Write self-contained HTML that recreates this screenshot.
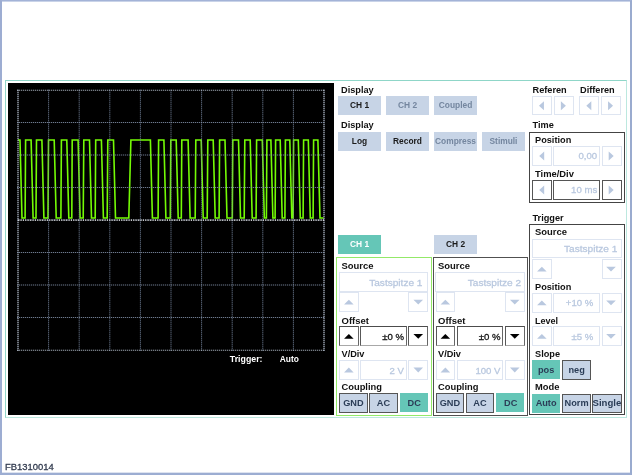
<!DOCTYPE html>
<html><head><meta charset="utf-8"><title>Oscilloscope</title>
<style>
html,body{margin:0;padding:0;}
body{width:632px;height:475px;position:relative;overflow:hidden;background:#fff;font-family:"Liberation Sans",Arial,Helvetica,sans-serif;}
#root{position:absolute;left:0;top:0;width:632px;height:475px;will-change:transform;}
#frame{position:absolute;left:0;top:0;width:628px;height:472px;border-style:solid;border-color:#a3b3d7 #9aabcf #9cadd2 #9dadd2;border-width:1px 2px 2px 2px;box-shadow:inset 0 1px 0 #c9d3e8, inset 0 -1px 0 #dde3f0;}
#panel{position:absolute;left:5px;top:80px;width:620px;height:336.3px;border:1px solid;border-color:#8fd6c8 #bce8df #bce8df #93d6c9;}
#scope{position:absolute;left:8px;top:83.1px;width:325.9px;height:331.7px;background:#000;}
.b{position:absolute;box-sizing:border-box;}
.t{position:absolute;line-height:12px;white-space:nowrap;}
.lb{font-weight:bold;color:#111;}
.bt,.bb{font-weight:bold;}
.v{font-weight:normal;-webkit-text-stroke:0.3px currentColor;}
svg{position:absolute;left:0;top:0;}
#foot{position:absolute;left:5px;top:461.3px;font-size:9.45px;line-height:12px;color:#333c50;-webkit-text-stroke:0.3px #333c50;}
</style></head><body>
<div id="root">
<div id="frame"></div>
<div id="panel"></div>
<div id="scope"></div>
<div class="t lb" style="top:83.96px;font-size:9.2px;transform:scaleY(0.89);left:341px;transform-origin:0 9.04px;">Display</div>
<div class="b" style="left:338px;top:96px;width:43px;height:19px;background:#c7d4e6;"></div>
<div class="t bt" style="top:98.92px;font-size:8.4px;transform:scaleY(1);left:309.5px;width:100px;text-align:center;transform-origin:50% 8.78px;color:#1a1a1a;">CH 1</div>
<div class="b" style="left:386px;top:96px;width:43px;height:19px;background:#c7d4e6;"></div>
<div class="t bt" style="top:98.92px;font-size:8.4px;transform:scaleY(1);left:357.5px;width:100px;text-align:center;transform-origin:50% 8.78px;color:#74869f;">CH 2</div>
<div class="b" style="left:434px;top:96px;width:43px;height:19px;background:#c7d4e6;"></div>
<div class="t bt" style="top:98.92px;font-size:8.4px;transform:scaleY(1);left:405.5px;width:100px;text-align:center;transform-origin:50% 8.78px;color:#74869f;">Coupled</div>
<div class="t lb" style="top:119.36px;font-size:9.2px;transform:scaleY(0.89);left:341px;transform-origin:0 9.04px;">Display</div>
<div class="b" style="left:338px;top:131.6px;width:43px;height:19.3px;background:#c7d4e6;"></div>
<div class="t bt" style="top:134.92px;font-size:8.4px;transform:scaleY(1);left:309.5px;width:100px;text-align:center;transform-origin:50% 8.78px;color:#1a1a1a;">Log</div>
<div class="b" style="left:386px;top:131.6px;width:43px;height:19.3px;background:#c7d4e6;"></div>
<div class="t bt" style="top:134.92px;font-size:8.4px;transform:scaleY(1);left:357.5px;width:100px;text-align:center;transform-origin:50% 8.78px;color:#1a1a1a;">Record</div>
<div class="b" style="left:434px;top:131.6px;width:43px;height:19.3px;background:#c7d4e6;"></div>
<div class="t bt" style="top:134.92px;font-size:8.4px;transform:scaleY(1);left:405.5px;width:100px;text-align:center;transform-origin:50% 8.78px;color:#74869f;">Compress</div>
<div class="b" style="left:482px;top:131.6px;width:43px;height:19.3px;background:#c7d4e6;"></div>
<div class="t bt" style="top:134.92px;font-size:8.4px;transform:scaleY(1);left:453.5px;width:100px;text-align:center;transform-origin:50% 8.78px;color:#74869f;">Stimuli</div>
<div class="t lb" style="top:83.56px;font-size:9.2px;transform:scaleY(0.89);left:532.5px;transform-origin:0 9.04px;">Referen</div>
<div class="t lb" style="top:83.56px;font-size:9.2px;transform:scaleY(0.89);left:580px;transform-origin:0 9.04px;">Differen</div>
<div class="b" style="left:531.6px;top:95.6px;width:20.1px;height:19.8px;background:#fff;border:1px solid #dee5f1;"></div>
<div class="b" style="left:554.2px;top:95.6px;width:19.8px;height:19.8px;background:#fff;border:1px solid #dee5f1;"></div>
<div class="b" style="left:579.2px;top:95.6px;width:19.6px;height:19.8px;background:#fff;border:1px solid #dee5f1;"></div>
<div class="b" style="left:601.2px;top:95.6px;width:20.1px;height:19.8px;background:#fff;border:1px solid #dee5f1;"></div>
<div class="t lb" style="top:119.16px;font-size:9.2px;transform:scaleY(0.89);left:532.5px;transform-origin:0 9.04px;">Time</div>
<div class="b" style="left:529px;top:132px;width:96px;height:71px;border:1px solid #444;"></div>
<div class="t lb" style="top:134.26px;font-size:9.2px;transform:scaleY(0.89);left:535px;transform-origin:0 9.04px;">Position</div>
<div class="b" style="left:532.1px;top:146.2px;width:19.6px;height:19.4px;background:#fff;border:1px solid #dee5f1;"></div>
<div class="b" style="left:553.4px;top:146.2px;width:46.3px;height:19.4px;background:#fff;border:1px solid #dee5f1;"></div>
<div class="b" style="left:602px;top:146.2px;width:19.8px;height:19.4px;background:#fff;border:1px solid #dee5f1;"></div>
<div class="t v" style="top:150.43px;font-size:9.6px;transform:scaleY(0.9);right:34.8px;transform-origin:100% 9.17px;color:#b9c8df;">0,00</div>
<div class="t lb" style="top:167.99px;font-size:9.4px;transform:scaleY(0.871);left:535px;transform-origin:0 9.11px;">Time/Div</div>
<div class="b" style="left:532.1px;top:180px;width:19.6px;height:19.7px;background:#fff;border:1px solid #555;"></div>
<div class="b" style="left:553.4px;top:180px;width:46.3px;height:19.7px;background:#fff;border:1px solid #555;"></div>
<div class="b" style="left:602px;top:180px;width:19.8px;height:19.7px;background:#fff;border:1px solid #555;"></div>
<div class="t v" style="top:184.43px;font-size:9.6px;transform:scaleY(0.9);right:34.8px;transform-origin:100% 9.17px;color:#b9c8df;">10 ms</div>
<div class="t lb" style="top:211.76px;font-size:9.2px;transform:scaleY(0.89);left:532.5px;transform-origin:0 9.04px;">Trigger</div>
<div class="b" style="left:529px;top:224px;width:95.8px;height:191.2px;border:1px solid #444;"></div>
<div class="t lb" style="top:226.38px;font-size:9.45px;transform:scaleY(0.867);left:535px;transform-origin:0 9.12px;">Source</div>
<div class="b" style="left:532px;top:239.2px;width:89.8px;height:19.3px;background:#fff;border:1px solid #dee5f1;"></div>
<div class="t v" style="top:243.26px;font-size:10.1px;transform:scaleY(0.9);right:14.7px;transform-origin:100% 9.34px;color:#b9c8df;">Tastspitze 1</div>
<div class="b" style="left:532px;top:258.8px;width:19.7px;height:20.4px;background:#fff;border:1px solid #dee5f1;"></div>
<div class="b" style="left:602px;top:258.8px;width:19.8px;height:20.4px;background:#fff;border:1px solid #dee5f1;"></div>
<div class="t lb" style="top:281.26px;font-size:9.2px;transform:scaleY(0.89);left:535px;transform-origin:0 9.04px;">Position</div>
<div class="b" style="left:532px;top:293px;width:19.7px;height:19.5px;background:#fff;border:1px solid #dee5f1;"></div>
<div class="b" style="left:553.4px;top:293px;width:46.3px;height:19.5px;background:#fff;border:1px solid #dee5f1;"></div>
<div class="b" style="left:602px;top:293px;width:19.8px;height:19.5px;background:#fff;border:1px solid #dee5f1;"></div>
<div class="t v" style="top:297.43px;font-size:9.6px;transform:scaleY(0.9);right:38.7px;transform-origin:100% 9.17px;color:#b9c8df;">+10 %</div>
<div class="t lb" style="top:314.61px;font-size:9.05px;transform:scaleY(0.905);left:535px;transform-origin:0 8.99px;">Level</div>
<div class="b" style="left:532px;top:326.4px;width:19.7px;height:19.6px;background:#fff;border:1px solid #dee5f1;"></div>
<div class="b" style="left:553.4px;top:326.4px;width:46.3px;height:19.6px;background:#fff;border:1px solid #dee5f1;"></div>
<div class="b" style="left:602px;top:326.4px;width:19.8px;height:19.6px;background:#fff;border:1px solid #dee5f1;"></div>
<div class="t v" style="top:330.63px;font-size:9.6px;transform:scaleY(0.9);right:38.7px;transform-origin:100% 9.17px;color:#b9c8df;">±5 %</div>
<div class="t lb" style="top:348.06px;font-size:9.2px;transform:scaleY(0.89);left:535px;transform-origin:0 9.04px;">Slope</div>
<div class="b" style="left:532px;top:360.2px;width:28.2px;height:19px;background:#65c6b7;"></div>
<div class="t bb" style="top:364.06px;font-size:9.2px;transform:scaleY(1);left:496.1px;width:100px;text-align:center;transform-origin:50% 9.04px;color:#2b3d57;">pos</div>
<div class="b" style="left:562.3px;top:360.2px;width:28.6px;height:19.5px;background:#c7d4e6;border:1px solid #555;"></div>
<div class="t bb" style="top:364.06px;font-size:9.2px;transform:scaleY(1);left:526.6px;width:100px;text-align:center;transform-origin:50% 9.04px;color:#2b3d57;">neg</div>
<div class="t lb" style="top:381.01px;font-size:9.35px;transform:scaleY(0.876);left:535px;transform-origin:0 9.09px;">Mode</div>
<div class="b" style="left:532px;top:393.5px;width:28.2px;height:19px;background:#65c6b7;"></div>
<div class="t bb" style="top:397.26px;font-size:9.2px;transform:scaleY(1);left:496.1px;width:100px;text-align:center;transform-origin:50% 9.04px;color:#2b3d57;">Auto</div>
<div class="b" style="left:562.3px;top:393.5px;width:28.6px;height:19.3px;background:#c7d4e6;border:1px solid #555;"></div>
<div class="t bb" style="top:397.26px;font-size:9.2px;transform:scaleY(1);left:526.6px;width:100px;text-align:center;transform-origin:50% 9.04px;color:#2b3d57;">Norm</div>
<div class="b" style="left:592.3px;top:393.5px;width:29.5px;height:19.3px;background:#c7d4e6;border:1px solid #555;"></div>
<div class="t bb" style="top:397.13px;font-size:9.6px;transform:scaleY(1);left:556.9px;width:100px;text-align:center;transform-origin:50% 9.17px;color:#2b3d57;">Single</div>
<div class="b" style="left:338px;top:235px;width:43px;height:19px;background:#65c6b7;"></div>
<div class="t bt" style="top:237.92px;font-size:8.4px;transform:scaleY(1);left:309.5px;width:100px;text-align:center;transform-origin:50% 8.78px;color:#fff;">CH 1</div>
<div class="b" style="left:434px;top:235px;width:43px;height:19px;background:#c7d4e6;"></div>
<div class="t bt" style="top:237.92px;font-size:8.4px;transform:scaleY(1);left:405.5px;width:100px;text-align:center;transform-origin:50% 8.78px;color:#1a1a1a;">CH 2</div>
<div class="b" style="left:336px;top:257px;width:96px;height:159px;border:1px solid #93e968;"></div>
<div class="b" style="left:432.7px;top:256.8px;width:95.3px;height:158.9px;border:1px solid #505050;"></div>
<div class="t lb" style="top:259.78px;font-size:9.45px;transform:scaleY(0.867);left:341.5px;transform-origin:0 9.12px;">Source</div>
<div class="b" style="left:338.8px;top:272px;width:89.7px;height:19.5px;background:#fff;border:1px solid #dee5f1;"></div>
<div class="t v" style="top:276.86px;font-size:10.1px;transform:scaleY(0.9);right:209.5px;transform-origin:100% 9.34px;color:#b9c8df;">Tastspitze 1</div>
<div class="b" style="left:339px;top:291.8px;width:19.7px;height:20.3px;background:#fff;border:1px solid #dee5f1;"></div>
<div class="b" style="left:408.3px;top:291.8px;width:19.9px;height:20.3px;background:#fff;border:1px solid #dee5f1;"></div>
<div class="t lb" style="top:314.66px;font-size:9.5px;transform:scaleY(0.862);left:341.5px;transform-origin:0 9.14px;">Offset</div>
<div class="b" style="left:339px;top:326.3px;width:19.7px;height:19.7px;background:#fff;border:1px solid;border-color:#4c4c4c #666 #a8a8a8 #585858;"></div>
<div class="b" style="left:360.2px;top:326.3px;width:46.5px;height:19.7px;background:#fff;border:1px solid;border-color:#4c4c4c #666 #a8a8a8 #585858;"></div>
<div class="b" style="left:408.3px;top:326.3px;width:19.9px;height:19.7px;background:#fff;border:1px solid;border-color:#4c4c4c #666 #a8a8a8 #585858;"></div>
<div class="t v" style="top:330.73px;font-size:9.6px;transform:scaleY(0.9);right:228.0px;transform-origin:100% 9.17px;color:#111;">±0 %</div>
<div class="t lb" style="top:347.76px;font-size:9.2px;transform:scaleY(0.89);left:341.5px;transform-origin:0 9.04px;">V/Div</div>
<div class="b" style="left:339px;top:360px;width:19.7px;height:19.6px;background:#fff;border:1px solid #dee5f1;"></div>
<div class="b" style="left:360.2px;top:360px;width:46.5px;height:19.6px;background:#fff;border:1px solid #dee5f1;"></div>
<div class="b" style="left:408.3px;top:360px;width:19.9px;height:19.6px;background:#fff;border:1px solid #dee5f1;"></div>
<div class="t v" style="top:364.63px;font-size:9.6px;transform:scaleY(0.9);right:228.0px;transform-origin:100% 9.17px;color:#b9c8df;">2 V</div>
<div class="t lb" style="top:381.11px;font-size:9.35px;transform:scaleY(0.876);left:341.5px;transform-origin:0 9.09px;">Coupling</div>
<div class="b" style="left:339px;top:393.3px;width:28.7px;height:19.4px;background:#c7d4e6;border:1px solid #555;"></div>
<div class="t bb" style="top:396.86px;font-size:9.2px;transform:scaleY(1);left:303.4px;width:100px;text-align:center;transform-origin:50% 9.04px;color:#2b3d57;">GND</div>
<div class="b" style="left:369.2px;top:393.3px;width:28.6px;height:19.4px;background:#c7d4e6;border:1px solid #555;"></div>
<div class="t bb" style="top:396.86px;font-size:9.2px;transform:scaleY(1);left:333.5px;width:100px;text-align:center;transform-origin:50% 9.04px;color:#2b3d57;">AC</div>
<div class="b" style="left:399.9px;top:393.3px;width:28.1px;height:19px;background:#65c6b7;"></div>
<div class="t bb" style="top:396.86px;font-size:9.2px;transform:scaleY(1);left:364.2px;width:100px;text-align:center;transform-origin:50% 9.04px;color:#2b3d57;">DC</div>
<div class="t lb" style="top:259.78px;font-size:9.45px;transform:scaleY(0.867);left:438.0px;transform-origin:0 9.12px;">Source</div>
<div class="b" style="left:435.3px;top:272px;width:89.7px;height:19.5px;background:#fff;border:1px solid #dee5f1;"></div>
<div class="t v" style="top:276.86px;font-size:10.1px;transform:scaleY(0.9);right:110.9px;transform-origin:100% 9.34px;color:#b9c8df;">Tastspitze 2</div>
<div class="b" style="left:435.5px;top:291.8px;width:19.7px;height:20.3px;background:#fff;border:1px solid #dee5f1;"></div>
<div class="b" style="left:504.8px;top:291.8px;width:19.9px;height:20.3px;background:#fff;border:1px solid #dee5f1;"></div>
<div class="t lb" style="top:314.66px;font-size:9.5px;transform:scaleY(0.862);left:438.0px;transform-origin:0 9.14px;">Offset</div>
<div class="b" style="left:435.5px;top:326.3px;width:19.7px;height:19.7px;background:#fff;border:1px solid;border-color:#4c4c4c #666 #a8a8a8 #585858;"></div>
<div class="b" style="left:456.7px;top:326.3px;width:46.5px;height:19.7px;background:#fff;border:1px solid;border-color:#4c4c4c #666 #a8a8a8 #585858;"></div>
<div class="b" style="left:504.8px;top:326.3px;width:19.9px;height:19.7px;background:#fff;border:1px solid;border-color:#4c4c4c #666 #a8a8a8 #585858;"></div>
<div class="t v" style="top:330.73px;font-size:9.6px;transform:scaleY(0.9);right:131.5px;transform-origin:100% 9.17px;color:#111;">±0 %</div>
<div class="t lb" style="top:347.76px;font-size:9.2px;transform:scaleY(0.89);left:438.0px;transform-origin:0 9.04px;">V/Div</div>
<div class="b" style="left:435.5px;top:360px;width:19.7px;height:19.6px;background:#fff;border:1px solid #dee5f1;"></div>
<div class="b" style="left:456.7px;top:360px;width:46.5px;height:19.6px;background:#fff;border:1px solid #dee5f1;"></div>
<div class="b" style="left:504.8px;top:360px;width:19.9px;height:19.6px;background:#fff;border:1px solid #dee5f1;"></div>
<div class="t v" style="top:364.63px;font-size:9.6px;transform:scaleY(0.9);right:131.5px;transform-origin:100% 9.17px;color:#b9c8df;">100 V</div>
<div class="t lb" style="top:381.11px;font-size:9.35px;transform:scaleY(0.876);left:438.0px;transform-origin:0 9.09px;">Coupling</div>
<div class="b" style="left:435.5px;top:393.3px;width:28.7px;height:19.4px;background:#c7d4e6;border:1px solid #555;"></div>
<div class="t bb" style="top:396.86px;font-size:9.2px;transform:scaleY(1);left:399.9px;width:100px;text-align:center;transform-origin:50% 9.04px;color:#2b3d57;">GND</div>
<div class="b" style="left:465.7px;top:393.3px;width:28.6px;height:19.4px;background:#c7d4e6;border:1px solid #555;"></div>
<div class="t bb" style="top:396.86px;font-size:9.2px;transform:scaleY(1);left:430.0px;width:100px;text-align:center;transform-origin:50% 9.04px;color:#2b3d57;">AC</div>
<div class="b" style="left:496.4px;top:393.3px;width:28.1px;height:19px;background:#65c6b7;"></div>
<div class="t bb" style="top:396.86px;font-size:9.2px;transform:scaleY(1);left:460.7px;width:100px;text-align:center;transform-origin:50% 9.04px;color:#2b3d57;">DC</div>
<svg width="632" height="475" viewBox="0 0 632 475">

<polyline points="18.0,140.0 20.0,140.0 22.0,218.0 25.1,218.0 25.6,140.0 31.1,140.0 33.1,218.0 36.0,218.0 36.5,140.0 41.9,140.0 43.9,218.0 48.0,218.0 48.5,140.0 54.2,140.0 56.2,218.0 60.9,218.0 61.4,140.0 66.8,140.0 68.8,218.0 71.8,218.0 72.2,140.0 78.1,140.0 80.1,218.0 83.2,218.0 83.8,140.0 89.5,140.0 91.5,218.0 95.2,218.0 95.7,140.0 101.4,140.0 103.4,218.0 107.2,218.0 107.8,140.0 113.5,140.0 115.5,218.0 128.8,218.0 130.9,140.0 150.4,140.0 152.4,218.0 158.1,218.0 158.6,140.0 163.9,140.0 165.9,218.0 170.3,218.0 170.8,140.0 176.2,140.0 178.2,218.0 181.3,218.0 181.8,140.0 188.1,140.0 190.1,218.0 195.2,218.0 195.8,140.0 201.2,140.0 203.2,218.0 207.2,218.0 207.8,140.0 213.2,140.0 215.2,218.0 219.1,218.0 219.6,140.0 225.0,140.0 227.0,218.0 232.3,218.0 232.8,140.0 238.5,140.0 240.5,218.0 244.2,218.0 244.8,140.0 250.2,140.0 252.2,218.0 256.1,218.0 256.6,140.0 262.3,140.0 264.3,218.0 266.4,218.0 266.9,140.0 270.9,140.0 272.9,218.0 275.1,218.0 275.6,140.0 280.2,140.0 282.2,218.0 284.9,218.0 285.4,140.0 289.8,140.0 291.8,218.0 293.1,218.0 293.6,140.0 298.3,140.0 300.3,218.0 303.1,218.0 303.6,140.0 308.3,140.0 310.3,218.0 313.1,218.0 313.6,140.0 317.9,140.0 320.0,218.0 323.6,218.0" fill="none" stroke="#74fb05" stroke-width="1.6" stroke-linejoin="miter"/>
<g shape-rendering="auto">
<line x1="18.0" y1="89.7" x2="18.0" y2="350.7" stroke="#b8c2d2" stroke-width="1.6" stroke-dasharray="1 1"/>
<line x1="48.6" y1="89.7" x2="48.6" y2="350.7" stroke="#7b8ba5" stroke-width="1" stroke-dasharray="1 1"/>
<line x1="79.2" y1="89.7" x2="79.2" y2="350.7" stroke="#7b8ba5" stroke-width="1" stroke-dasharray="1 1"/>
<line x1="109.8" y1="89.7" x2="109.8" y2="350.7" stroke="#7b8ba5" stroke-width="1" stroke-dasharray="1 1"/>
<line x1="140.4" y1="89.7" x2="140.4" y2="350.7" stroke="#7b8ba5" stroke-width="1" stroke-dasharray="1 1"/>
<line x1="171.0" y1="89.7" x2="171.0" y2="350.7" stroke="#7b8ba5" stroke-width="1" stroke-dasharray="1 1"/>
<line x1="201.6" y1="89.7" x2="201.6" y2="350.7" stroke="#7b8ba5" stroke-width="1" stroke-dasharray="1 1"/>
<line x1="232.2" y1="89.7" x2="232.2" y2="350.7" stroke="#7b8ba5" stroke-width="1" stroke-dasharray="1 1"/>
<line x1="262.8" y1="89.7" x2="262.8" y2="350.7" stroke="#7b8ba5" stroke-width="1" stroke-dasharray="1 1"/>
<line x1="293.4" y1="89.7" x2="293.4" y2="350.7" stroke="#7b8ba5" stroke-width="1" stroke-dasharray="1 1"/>
<line x1="324.0" y1="89.7" x2="324.0" y2="350.7" stroke="#b8c2d2" stroke-width="1.6" stroke-dasharray="1 1"/>
<line x1="17.2" y1="90.25" x2="324.8" y2="90.25" stroke="#c2cbd9" stroke-width="1.2" stroke-dasharray="1 1"/>
<line x1="17.2" y1="122.50" x2="324.8" y2="122.50" stroke="#8796af" stroke-width="1" stroke-dasharray="1 1"/>
<line x1="17.2" y1="155.00" x2="324.8" y2="155.00" stroke="#8796af" stroke-width="1" stroke-dasharray="1 1"/>
<line x1="17.2" y1="187.50" x2="324.8" y2="187.50" stroke="#8796af" stroke-width="1" stroke-dasharray="1 1"/>
<line x1="17.2" y1="220.00" x2="324.8" y2="220.00" stroke="#8796af" stroke-width="1" stroke-dasharray="1 1"/>
<line x1="17.2" y1="252.50" x2="324.8" y2="252.50" stroke="#8796af" stroke-width="1" stroke-dasharray="1 1"/>
<line x1="17.2" y1="285.00" x2="324.8" y2="285.00" stroke="#8796af" stroke-width="1" stroke-dasharray="1 1"/>
<line x1="17.2" y1="317.50" x2="324.8" y2="317.50" stroke="#8796af" stroke-width="1" stroke-dasharray="1 1"/>
<line x1="17.2" y1="350.25" x2="324.8" y2="350.25" stroke="#c2cbd9" stroke-width="1.2" stroke-dasharray="1 1"/>
<line x1="18" y1="220.1" x2="324" y2="220.1" stroke="#f0f0f0" stroke-width="1.2" stroke-dasharray="1.2 1.2"/>
</g>
<text x="229.8" y="361.8" font-family="Liberation Sans, Arial, sans-serif" font-size="8.8" font-weight="bold" fill="#fff" transform="translate(0 361.8) scale(1 .95) translate(0 -361.8)">Trigger:</text>
<text x="279.8" y="361.8" font-family="Liberation Sans, Arial, sans-serif" font-size="8.4" font-weight="bold" fill="#fff">Auto</text>
<polygon points="538.9499999999999,105.7 543.9499999999999,101.2 543.9499999999999,110.2" fill="#b9c8df"/>
<polygon points="565.9,105.7 560.9,101.2 560.9,110.2" fill="#b9c8df"/>
<polygon points="586.3,105.7 591.3,101.2 591.3,110.2" fill="#b9c8df"/>
<polygon points="613.05,105.7 608.05,101.2 608.05,110.2" fill="#b9c8df"/>
<polygon points="539.1999999999999,156.09999999999997 544.1999999999999,151.59999999999997 544.1999999999999,160.59999999999997" fill="#b9c8df"/>
<polygon points="613.6999999999999,156.09999999999997 608.6999999999999,151.59999999999997 608.6999999999999,160.59999999999997" fill="#b9c8df"/>
<polygon points="539.1999999999999,190.04999999999998 544.1999999999999,185.54999999999998 544.1999999999999,194.54999999999998" fill="#b9c8df"/>
<polygon points="613.6999999999999,190.04999999999998 608.6999999999999,185.54999999999998 608.6999999999999,194.54999999999998" fill="#b9c8df"/>
<polygon points="541.85,266.8 537.0500000000001,271.59999999999997 546.65,271.59999999999997" fill="#b9c8df"/>
<polygon points="611.0,271.59999999999997 606.2,266.8 615.8,266.8" fill="#b9c8df"/>
<polygon points="541.85,300.55 537.0500000000001,305.34999999999997 546.65,305.34999999999997" fill="#b9c8df"/>
<polygon points="611.0,305.34999999999997 606.2,300.55 615.8,300.55" fill="#b9c8df"/>
<polygon points="541.85,334.0 537.0500000000001,338.79999999999995 546.65,338.79999999999995" fill="#b9c8df"/>
<polygon points="611.0,338.79999999999995 606.2,334.0 615.8,334.0" fill="#b9c8df"/>
<polygon points="348.85,299.75 344.05,304.54999999999995 353.65000000000003,304.54999999999995" fill="#b9c8df"/>
<polygon points="418.25,304.54999999999995 413.45,299.75 423.05,299.75" fill="#b9c8df"/>
<polygon points="348.85,333.95000000000005 344.05,338.75 353.65000000000003,338.75" fill="#000"/>
<polygon points="418.25,338.75 413.45,333.95000000000005 423.05,333.95000000000005" fill="#000"/>
<polygon points="348.85,367.6 344.05,372.4 353.65000000000003,372.4" fill="#b9c8df"/>
<polygon points="418.25,372.4 413.45,367.6 423.05,367.6" fill="#b9c8df"/>
<polygon points="445.35,299.75 440.55,304.54999999999995 450.15000000000003,304.54999999999995" fill="#b9c8df"/>
<polygon points="514.75,304.54999999999995 509.95,299.75 519.55,299.75" fill="#b9c8df"/>
<polygon points="445.35,333.95000000000005 440.55,338.75 450.15000000000003,338.75" fill="#000"/>
<polygon points="514.75,338.75 509.95,333.95000000000005 519.55,333.95000000000005" fill="#000"/>
<polygon points="445.35,367.6 440.55,372.4 450.15000000000003,372.4" fill="#b9c8df"/>
<polygon points="514.75,372.4 509.95,367.6 519.55,367.6" fill="#b9c8df"/>
</svg>
<div id="foot">FB1310014</div>
</div>
</body></html>
